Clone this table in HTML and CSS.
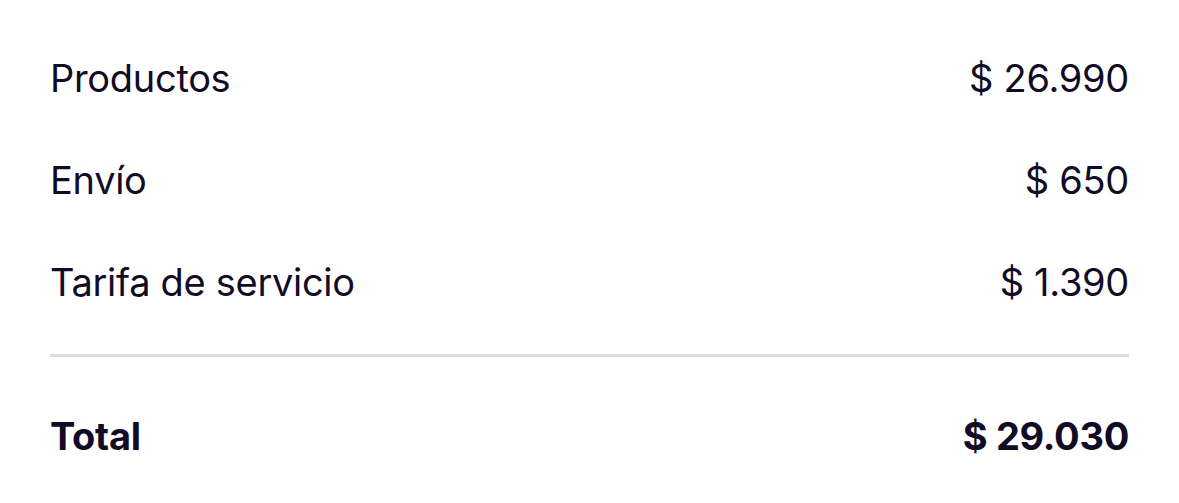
FILE: index.html
```html
<!DOCTYPE html>
<html lang="es">
<head>
<meta charset="utf-8">
<link rel="stylesheet" href="styles.css">
</head>
<body>
<div class="summary">
  <div class="row"><span>Productos</span><span>$ 26.990</span></div>
  <div class="row"><span>Envío</span><span>$ 650</span></div>
  <div class="row"><span>Tarifa de servicio</span><span>$ 1.390</span></div>
  <div class="divider"></div>
  <div class="row total"><span>Total</span><span>$ 29.030</span></div>
</div>
</body>
</html>
```
FILE: styles.css
```css
html, body {
  margin: 0;
  background: #ffffff;
}
.summary {
  padding: 27px 50px 0 50px;
  font-family: Inter, "Noto Sans", sans-serif;
  color: #110b26;
}
.row {
  display: flex;
  justify-content: space-between;
  align-items: center;
  height: 102px;
  font-size: 38px;
  letter-spacing: -0.3px;
}
.divider {
  height: 3px;
  background: #dddddd;
  margin: 21px 0 0 0;
}
.total {
  margin-top: 28px;
  font-weight: 700;
}
```
